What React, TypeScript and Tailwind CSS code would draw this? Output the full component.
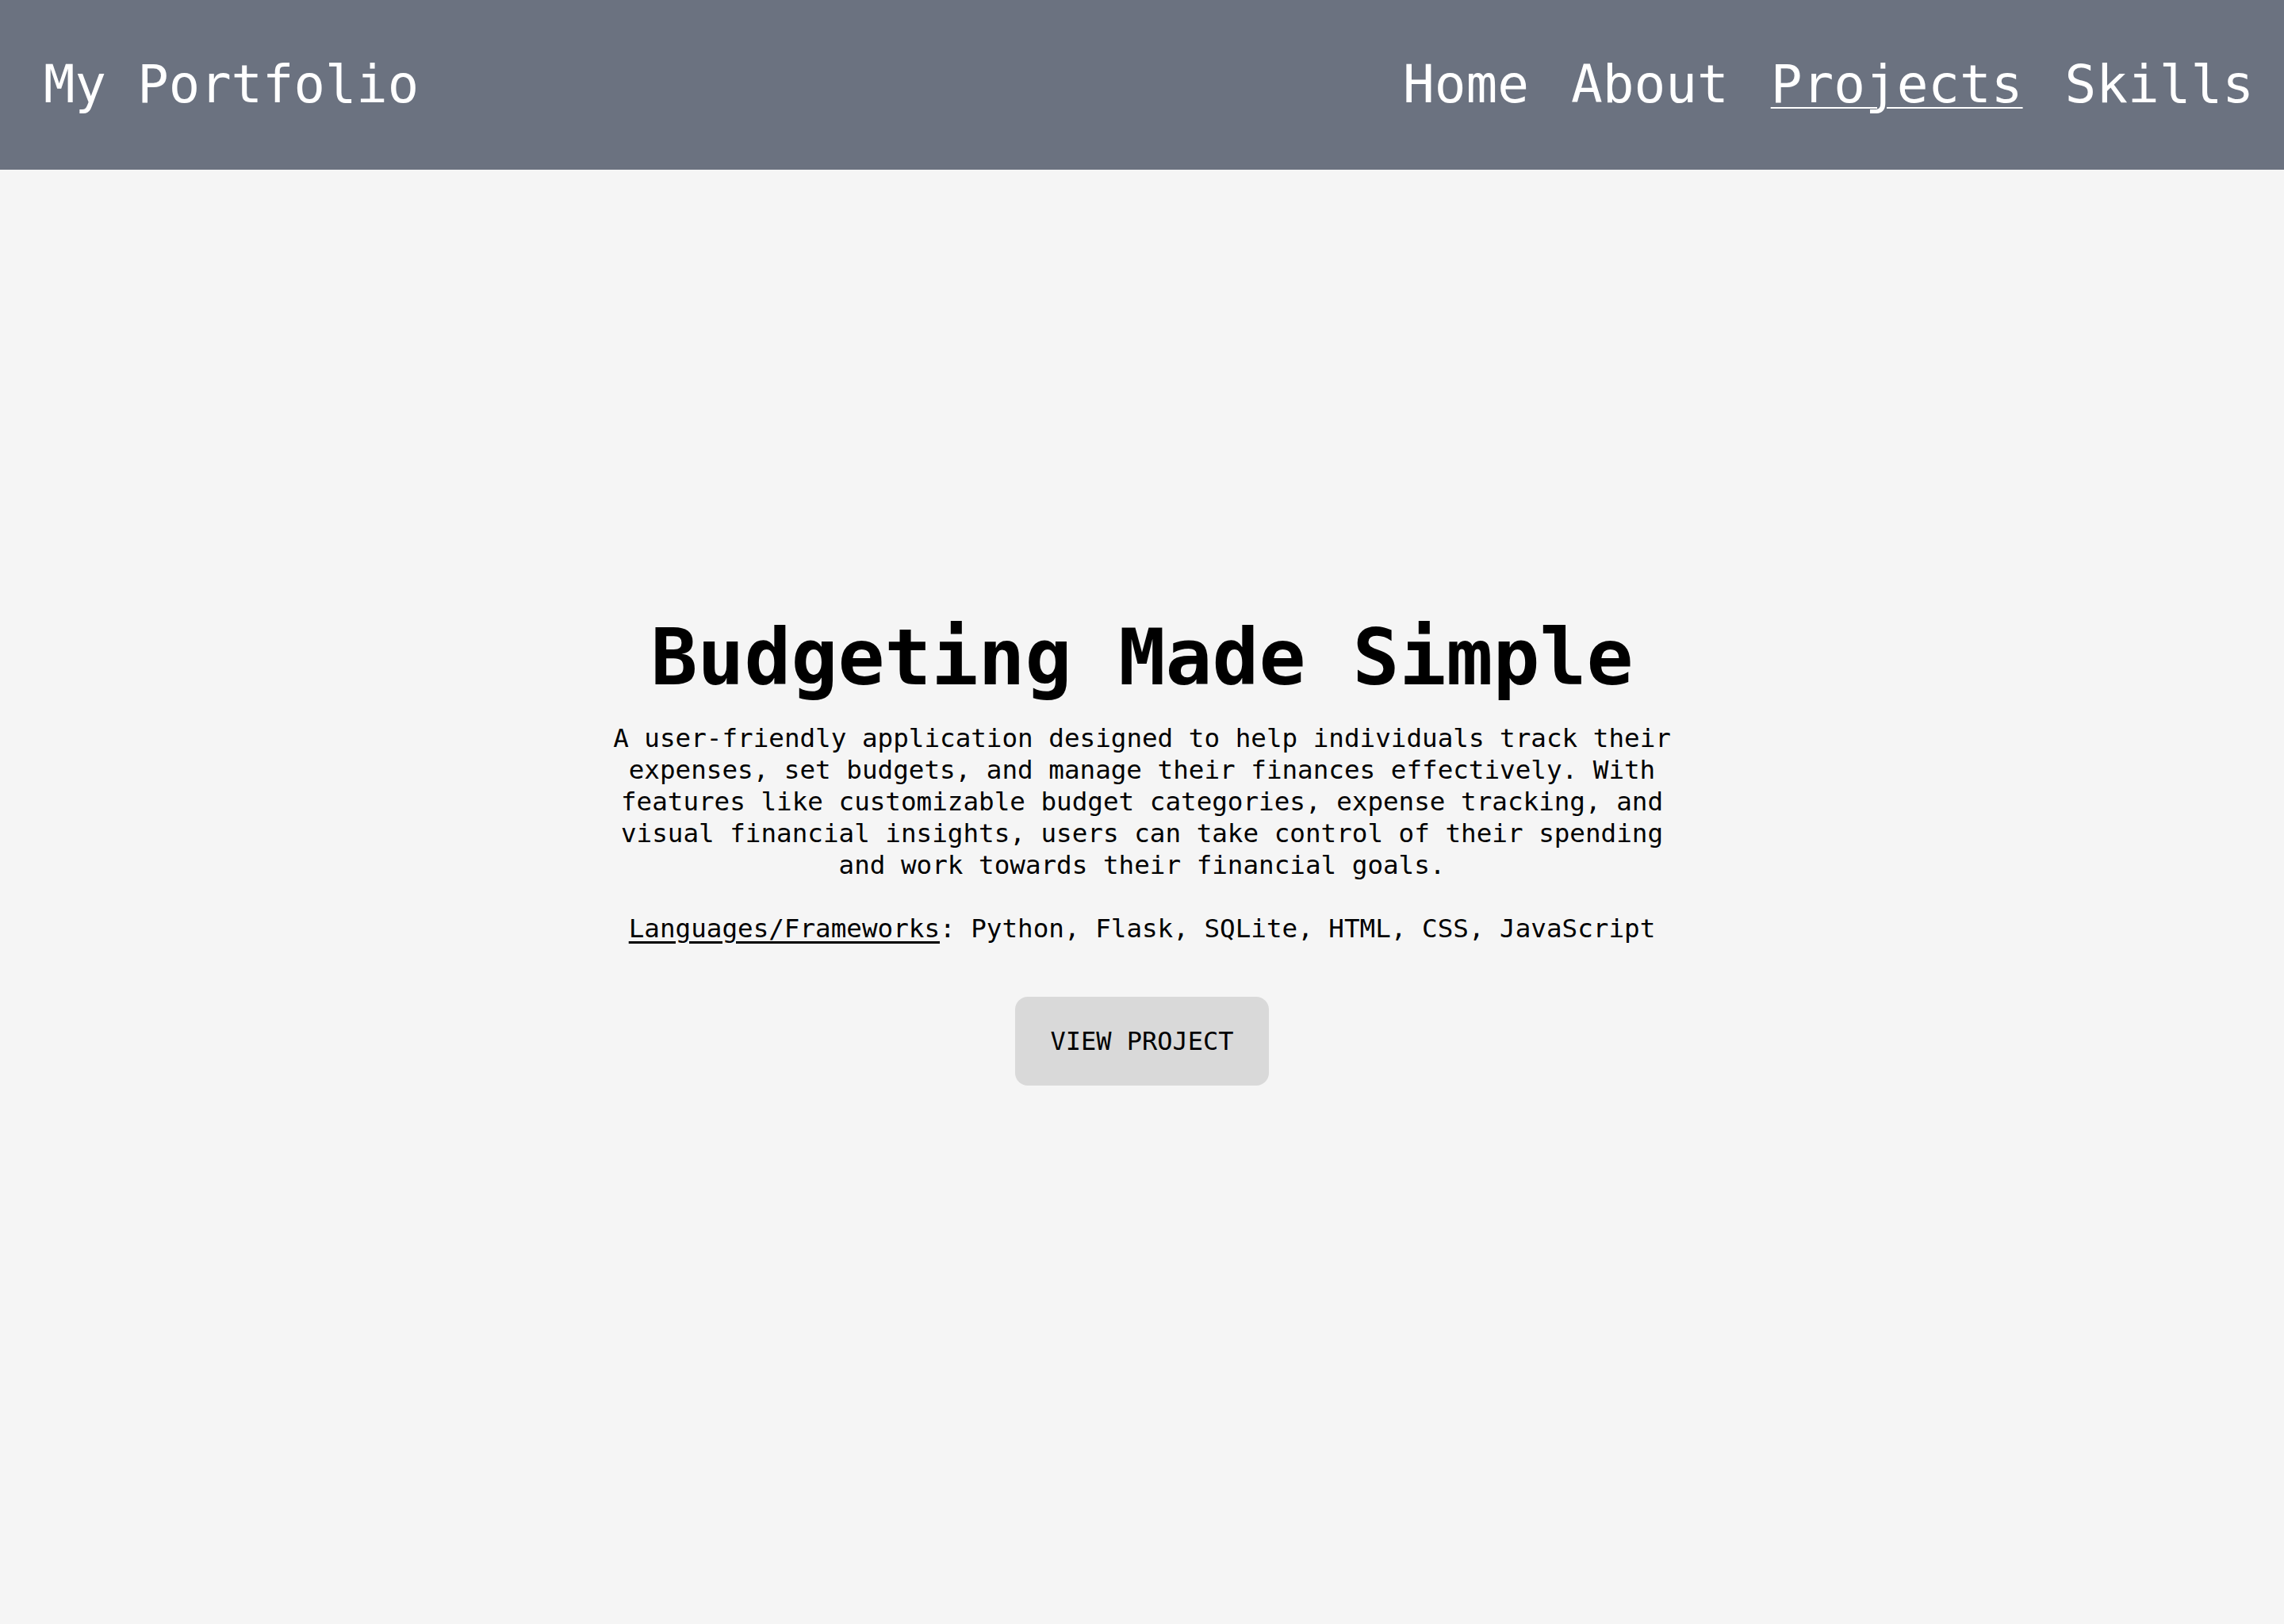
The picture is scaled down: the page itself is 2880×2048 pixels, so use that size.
import React from "react";

const mono = { fontFamily: '"DejaVu Sans Mono", "Liberation Mono", monospace' };

export default function App() {
  return (
    <div className="min-h-[2048px] bg-[#f5f5f5] text-black flex flex-col" style={mono}>
      <header className="h-[214px] bg-[#6b7280] flex items-center justify-between pl-[55px] pr-[38px] text-white">
        <a className="text-[65.5px] leading-none">My Portfolio</a>
        <nav className="flex items-center gap-[53px] text-[66px] leading-none">
          <a>Home</a>
          <a>About</a>
          <a className="underline decoration-[2px] underline-offset-[6px]">Projects</a>
          <a>Skills</a>
        </nav>
      </header>
      <main className="flex flex-col items-center pt-[555px] text-center">
        <h1 className="text-[98px] leading-[120px] font-bold">Budgeting Made Simple</h1>
        <p className="mt-[22px] max-w-[69ch] text-[32.6px] leading-[40px]">
          A user-friendly application designed to help individuals track their expenses, set budgets, and manage their finances effectively. With features like customizable budget categories, expense tracking, and visual financial insights, users can take control of their spending and work towards their financial goals.
        </p>
        <p className="mt-10 text-[32.6px] leading-[40px]">
          <span className="underline underline-offset-[5px]">Languages/Frameworks</span>: Python, Flask, SQLite, HTML, CSS, JavaScript
        </p>
        <button className="mt-[66px] rounded-[16px] bg-[#d9d9d9] px-[44px] py-9 text-[32px] leading-[40px]">
          VIEW PROJECT
        </button>
      </main>
    </div>
  );
}
